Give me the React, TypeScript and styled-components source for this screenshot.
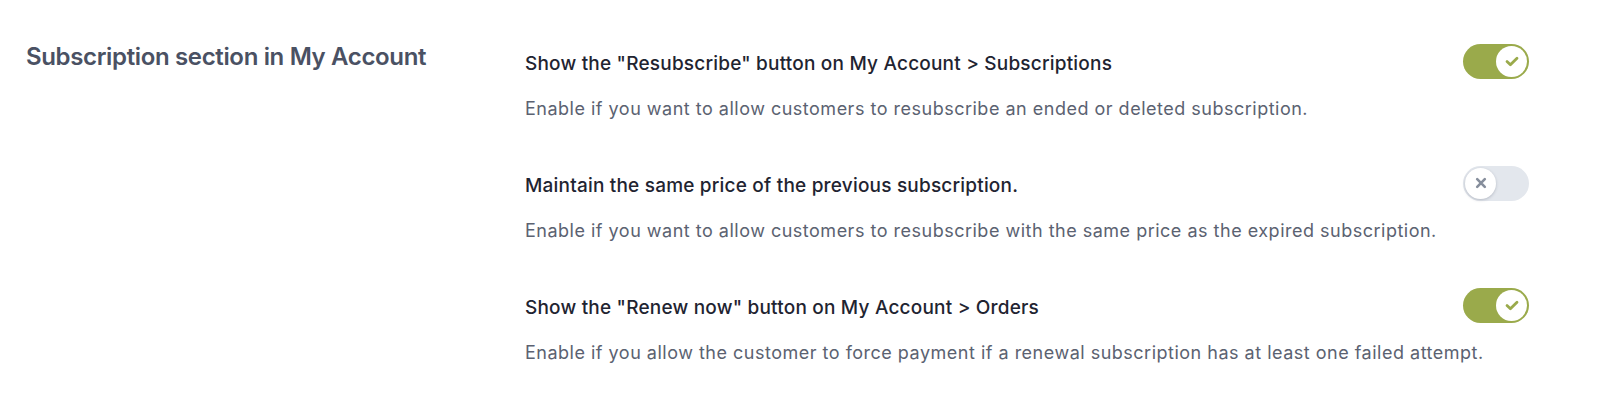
import React from 'react';
import styled, { createGlobalStyle } from 'styled-components';

const GlobalStyle = createGlobalStyle`
    body {
        margin: 0;
        background: #ffffff;
        font-family: Inter, 'Noto Sans', sans-serif;
        -webkit-font-smoothing: antialiased;
    }
`;

const Section = styled.section`
    display: grid;
    grid-template-columns: 499px 1fr;
    padding: 41px 91px 0 26px;
`;

const SectionTitle = styled.h2`
    margin: 0;
    font-size: 24px;
    line-height: 32px;
    font-weight: 600;
    color: #4a5163;
    letter-spacing: -0.35px;
`;

const Options = styled.div`
    display: flex;
    flex-direction: column;
    gap: 50px;
    padding-top: 9px;
`;

const Option = styled.div`
    display: flex;
    flex-direction: column;
    gap: 18px;
`;

const Header = styled.div`
    display: flex;
    align-items: flex-start;
    justify-content: space-between;
    gap: 24px;
    height: 28px;
`;

const Label = styled.span`
    font-size: 19px;
    line-height: 28px;
    font-weight: 500;
    color: #1f2431;
    letter-spacing: 0.2px;
    white-space: nowrap;
`;

const Description = styled.span`
    font-size: 18px;
    line-height: 26px;
    font-weight: 400;
    color: #5b6271;
    letter-spacing: 0.5px;
    white-space: nowrap;
`;

const Track = styled.button<{ $on: boolean }>`
    flex: none;
    display: flex;
    align-items: center;
    justify-content: ${(p) => (p.$on ? 'flex-end' : 'flex-start')};
    width: 66px;
    height: 35px;
    margin-top: -6.5px;
    padding: 2px;
    border: none;
    border-radius: 18px;
    background: ${(p) => (p.$on ? '#9aaa4b' : '#e3e7ed')};
    cursor: pointer;
`;

const Knob = styled.span<{ $on: boolean }>`
    display: flex;
    align-items: center;
    justify-content: center;
    width: 31px;
    height: 31px;
    border-radius: 50%;
    background: #ffffff;
    box-shadow: ${(p) => (p.$on ? 'none' : '0 1px 3px rgba(60, 70, 90, 0.28)')};
`;

const Toggle: React.FC<{ on: boolean }> = ({ on }) => (
    <Track $on={on} type="button" aria-pressed={on}>
        <Knob $on={on}>
            {on ? (
                <svg width="14" height="11" viewBox="0 0 14 11" fill="none">
                    <path
                        d="M2 5.6 L5.4 8.8 L12 2.2"
                        stroke="#9aaa4b"
                        strokeWidth="2.8"
                        strokeLinecap="round"
                        strokeLinejoin="round"
                    />
                </svg>
            ) : (
                <svg width="12" height="12" viewBox="0 0 12 12" fill="none">
                    <path
                        d="M2.2 2.2 L9.8 9.8 M9.8 2.2 L2.2 9.8"
                        stroke="#868e9c"
                        strokeWidth="2.6"
                        strokeLinecap="round"
                    />
                </svg>
            )}
        </Knob>
    </Track>
);

interface OptionData {
    label: string;
    description: string;
    on: boolean;
}

const options: OptionData[] = [
    {
        label: 'Show the "Resubscribe" button on My Account > Subscriptions',
        description:
            'Enable if you want to allow customers to resubscribe an ended or deleted subscription.',
        on: true,
    },
    {
        label: 'Maintain the same price of the previous subscription.',
        description:
            'Enable if you want to allow customers to resubscribe with the same price as the expired subscription.',
        on: false,
    },
    {
        label: 'Show the "Renew now" button on My Account > Orders',
        description:
            'Enable if you allow the customer to force payment if a renewal subscription has at least one failed attempt.',
        on: true,
    },
];

const App: React.FC = () => (
    <>
        <GlobalStyle />
        <Section>
            <SectionTitle>Subscription section in My Account</SectionTitle>
            <Options>
                {options.map((item) => (
                    <Option key={item.label}>
                        <Header>
                            <Label>{item.label}</Label>
                            <Toggle on={item.on} />
                        </Header>
                        <Description>{item.description}</Description>
                    </Option>
                ))}
            </Options>
        </Section>
    </>
);

export default App;
